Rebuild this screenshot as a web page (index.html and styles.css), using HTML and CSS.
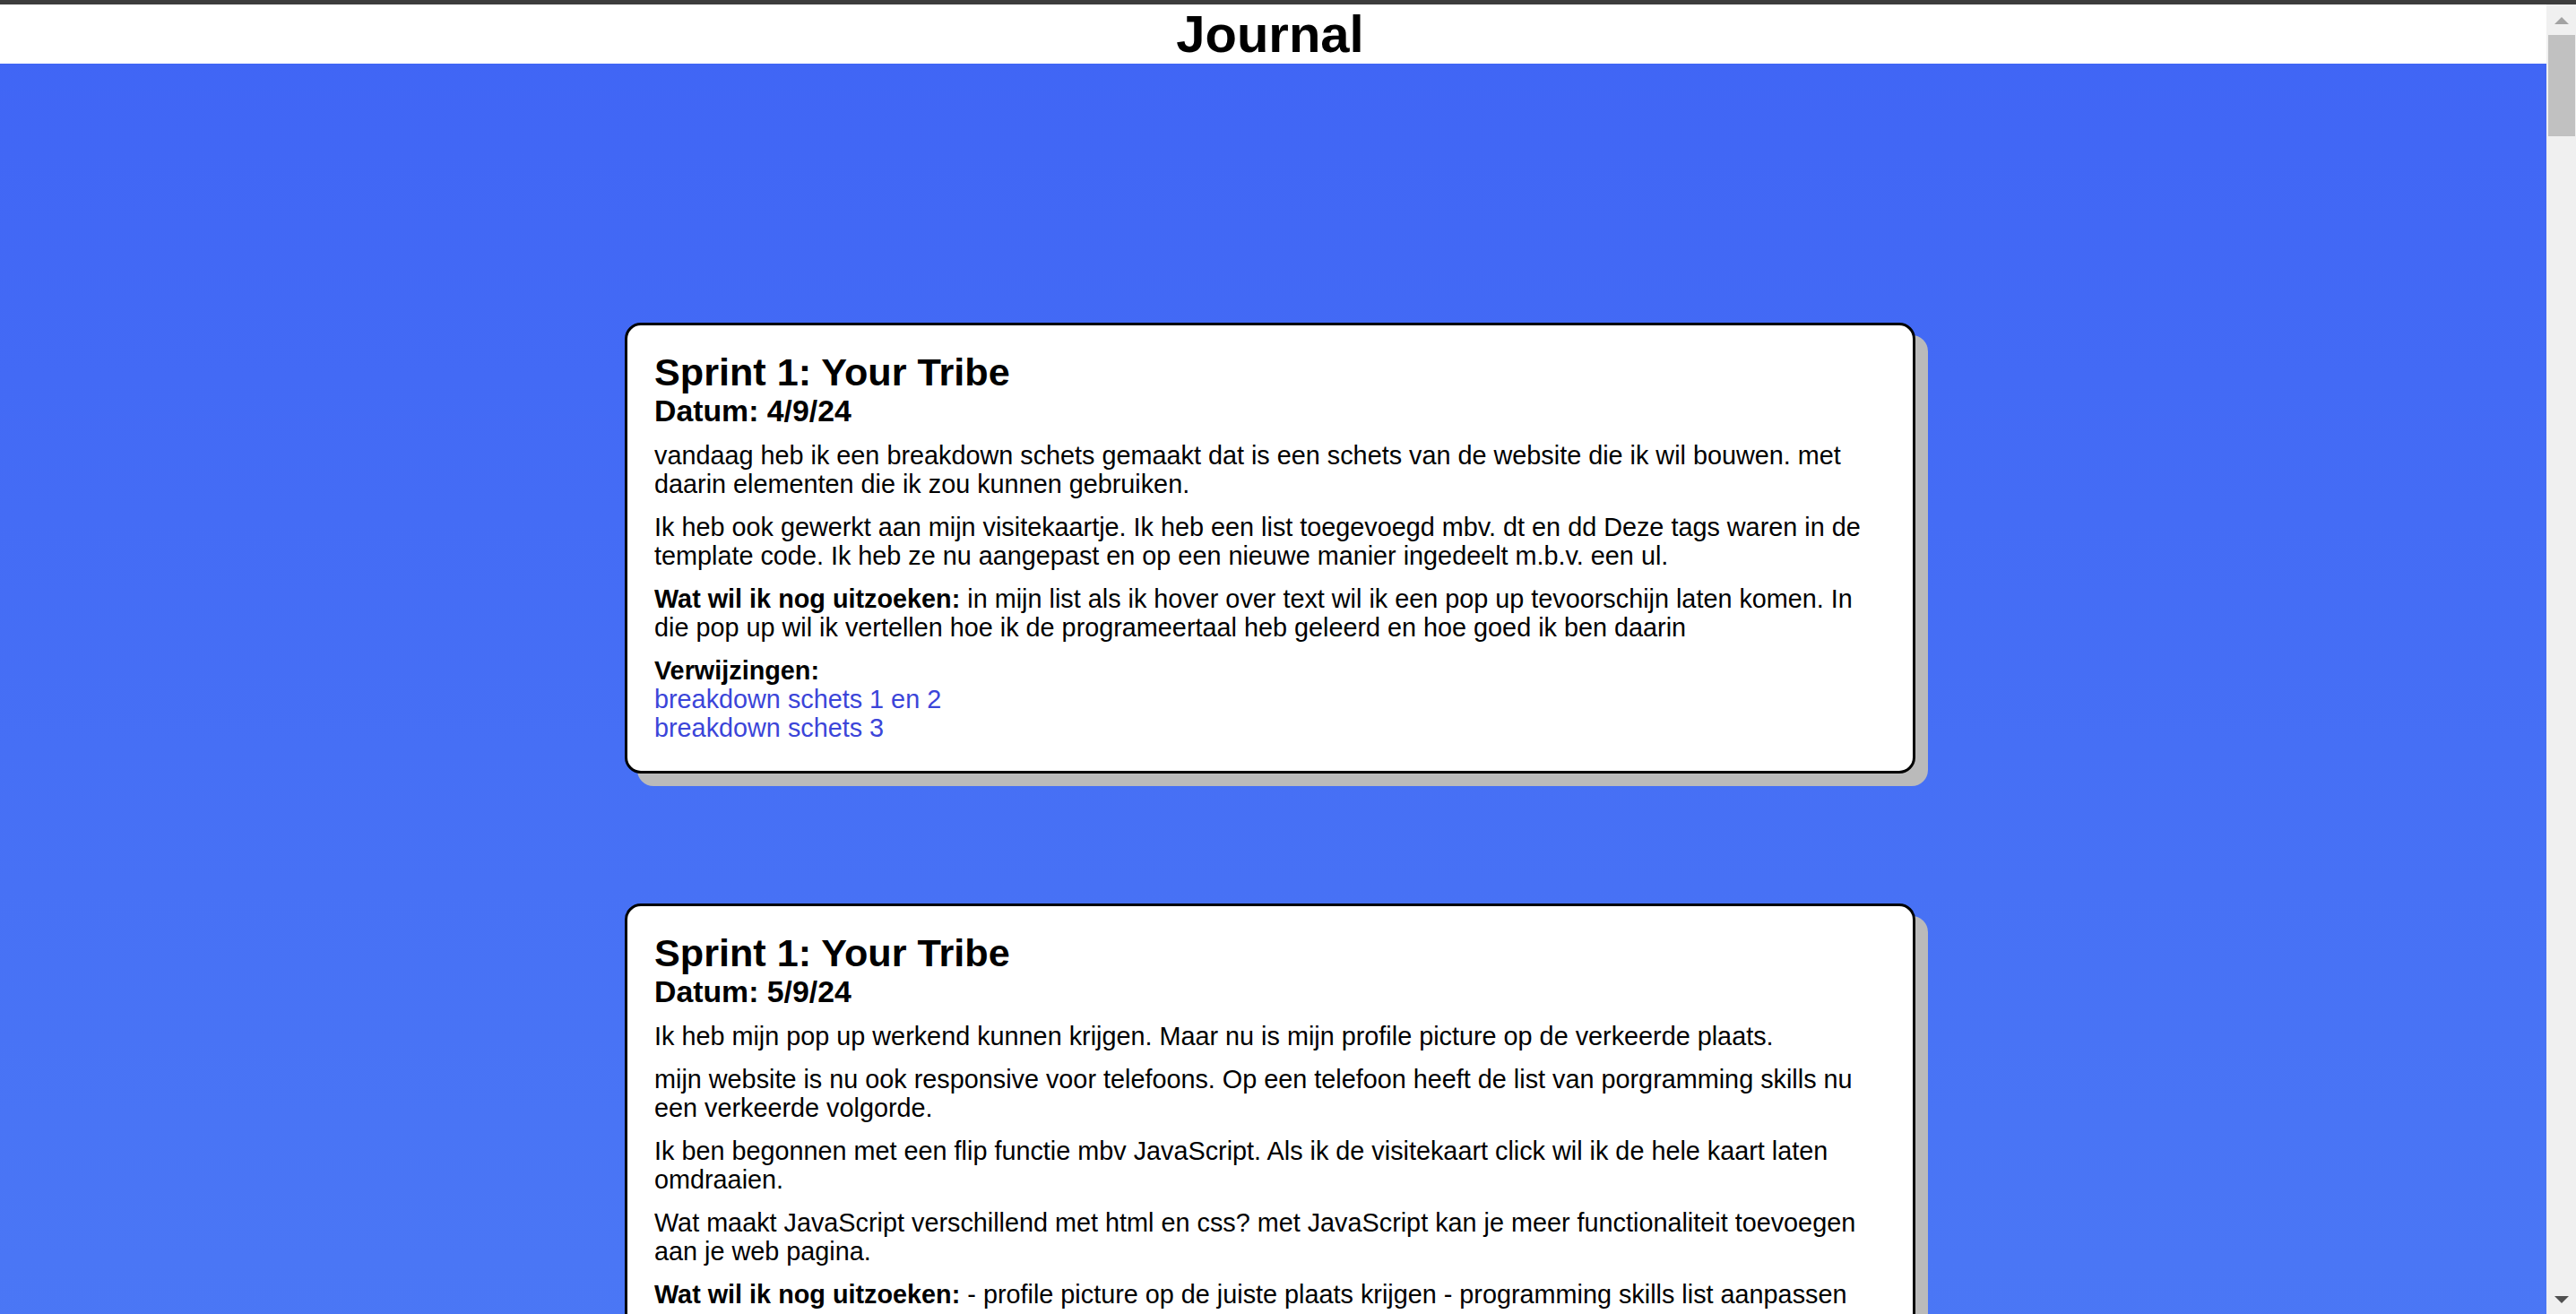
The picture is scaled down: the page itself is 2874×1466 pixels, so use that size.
FILE: index.html
```html
<!DOCTYPE html>
<html lang="nl">
<head>
<meta charset="utf-8">
<title>Journal</title>
<link rel="stylesheet" href="styles.css">
</head>
<body>
<div class="topbar"></div>
<div class="window">
  <div class="page">
    <header class="site-header">
      <h1 class="site-title">Journal</h1>
    </header>
    <main class="journal">
      <article class="entry">
        <h2 class="entry-title">Sprint 1: Your Tribe</h2>
        <h3 class="entry-date">Datum: 4/9/24</h3>
        <p>vandaag heb ik een breakdown schets gemaakt dat is een schets van de website die ik wil bouwen. met daarin elementen die ik zou kunnen gebruiken.</p>
        <p>Ik heb ook gewerkt aan mijn visitekaartje. Ik heb een list toegevoegd mbv. dt en dd Deze tags waren in de template code. Ik heb ze nu aangepast en op een nieuwe manier ingedeelt m.b.v. een ul.</p>
        <p><strong>Wat wil ik nog uitzoeken:</strong> in mijn list als ik hover over text wil ik een pop up tevoorschijn laten komen. In die pop up wil ik vertellen hoe ik de programeertaal heb geleerd en hoe goed ik ben daarin</p>
        <p><strong>Verwijzingen:</strong><br><a href="#">breakdown schets 1 en 2</a><br><a href="#">breakdown schets 3</a></p>
      </article>
      <article class="entry">
        <h2 class="entry-title">Sprint 1: Your Tribe</h2>
        <h3 class="entry-date">Datum: 5/9/24</h3>
        <p>Ik heb mijn pop up werkend kunnen krijgen. Maar nu is mijn profile picture op de verkeerde plaats.</p>
        <p>mijn website is nu ook responsive voor telefoons. Op een telefoon heeft de list van porgramming skills nu een verkeerde volgorde.</p>
        <p>Ik ben begonnen met een flip functie mbv JavaScript. Als ik de visitekaart click wil ik de hele kaart laten omdraaien.</p>
        <p>Wat maakt JavaScript verschillend met html en css? met JavaScript kan je meer functionaliteit toevoegen aan je web pagina.</p>
        <p><strong>Wat wil ik nog uitzoeken:</strong> - profile picture op de juiste plaats krijgen - programming skills list aanpassen</p>
        <p><strong>Verwijzingen:</strong><br><a href="#">flip functie</a></p>
      </article>
    </main>
  </div>
  <div class="scrollbar">
    <div class="sb-button"><span class="arrow-up"></span></div>
    <div class="sb-track"><div class="sb-thumb"></div></div>
    <div class="sb-button"><span class="arrow-down"></span></div>
  </div>
</div>
</body>
</html>
```

FILE: styles.css
```css
html, body {
  margin: 0;
  padding: 0;
  height: 100%;
}

body {
  display: flex;
  flex-direction: column;
  overflow: hidden;
  font-family: "Liberation Sans", Arial, sans-serif;
  color: #000;
  background: #fff;
}

.topbar {
  height: 5px;
  flex: none;
  background: #3d3d3d;
}

.window {
  flex: 1;
  min-height: 0;
  display: flex;
}

.page {
  flex: 1;
  min-width: 0;
  overflow: hidden;
  background: linear-gradient(to bottom, #4065f5 0, #4a76f5 1400px, #5585f6 3200px);
}

.site-header {
  background: #fff;
  height: 66px;
  padding-right: 7px;
}

.site-title {
  margin: 0;
  font-size: 58px;
  line-height: 66px;
  font-weight: bold;
  text-align: center;
}

.journal {
  display: flex;
  flex-direction: column;
  align-items: center;
  gap: 145px;
  padding: 289px 7px 200px 0;
}

.entry {
  box-sizing: border-box;
  width: 1440px;
  background: #fff;
  border: 3px solid #000;
  border-radius: 18px;
  box-shadow: 14px 14px 0 #bababa;
  padding: 28px 36px 32px 30px;
  font-size: 28.8px;
  line-height: 32px;
}

.entry-title {
  margin: 0;
  font-size: 43.2px;
  line-height: 48px;
  font-weight: bold;
}

.entry-date {
  margin: 0 0 15px;
  font-size: 33.8px;
  line-height: 38px;
  font-weight: bold;
}

.entry p {
  margin: 0;
}

.entry p + p {
  margin-top: 16px;
}

.entry a {
  color: #3b45d9;
  text-decoration: none;
}

.scrollbar {
  width: 33px;
  flex: none;
  background: #f0f0f0;
  display: flex;
  flex-direction: column;
}

.sb-button {
  height: 33px;
  flex: none;
  display: flex;
  align-items: center;
  justify-content: center;
}

.arrow-up {
  width: 0;
  height: 0;
  border-left: 8px solid transparent;
  border-right: 8px solid transparent;
  border-bottom: 8px solid #a3a3a3;
  margin-top: 3px;
}

.arrow-down {
  width: 0;
  height: 0;
  border-left: 8px solid transparent;
  border-right: 8px solid transparent;
  border-top: 8px solid #505050;
}

.sb-track {
  flex: 1;
  padding: 1px 1px 0 2px;
}

.sb-thumb {
  height: 113px;
  background: #c1c1c1;
}
```
